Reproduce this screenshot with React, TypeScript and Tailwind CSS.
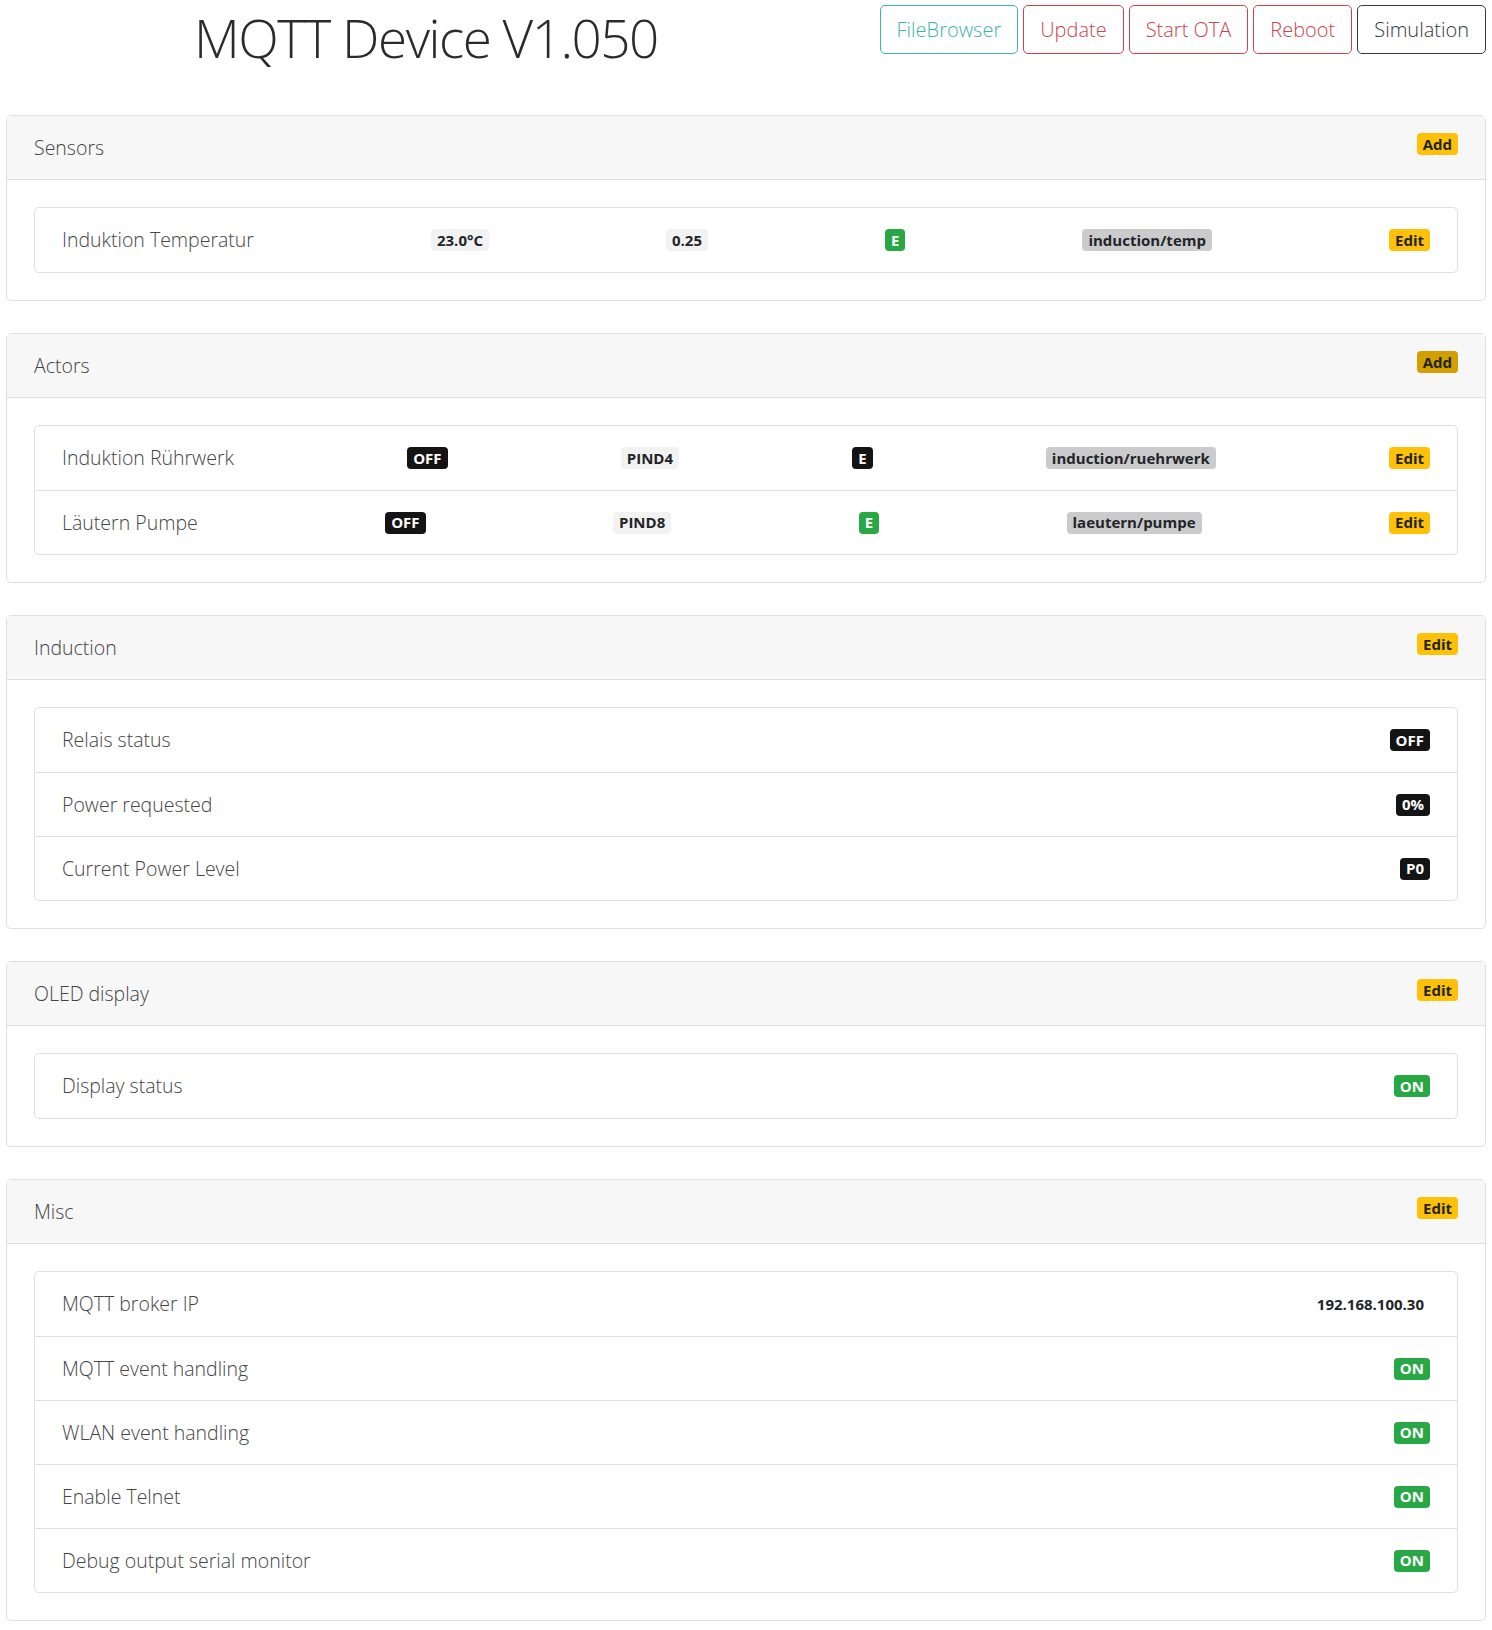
import React from 'react';

type Tone = 'warning' | 'warningDark' | 'dark' | 'success' | 'light' | 'gray' | 'plain';

const toneClass: Record<Tone, string> = {
    warning: 'bg-[#ffc107] text-[#212529]',
    warningDark: 'bg-[#d39e00] text-[#212529]',
    dark: 'bg-[#141414] text-white',
    success: 'bg-[#28a745] text-white',
    light: 'bg-[#f2f2f2] text-[#212529]',
    gray: 'bg-[#cbcbcb] text-[#212529]',
    plain: 'bg-transparent text-[#212529]',
};

function Badge({ tone, children }: { tone: Tone; children: React.ReactNode }) {
    return (
        <span className={`inline-flex h-[22px] items-center rounded-[4px] px-[6px] text-[15px] font-bold leading-none whitespace-nowrap ${toneClass[tone]}`}>
            {children}
        </span>
    );
}

function Card({ title, action, actionTone = 'warning', children }: { title: string; action: string; actionTone?: Tone; children: React.ReactNode }) {
    return (
        <div className="mx-[6px] mb-[32px] rounded-[5px] border border-[#dfdfdf] bg-white">
            {/* Header */}
            <div className="flex h-[64px] items-center justify-between border-b border-[#dfdfdf] bg-[#f7f7f7] px-[27px]">
                <span className="text-[19.5px] font-light text-[#444]">{title}</span>
                <span className="-mt-[8px]">
                    <Badge tone={actionTone}>{action}</Badge>
                </span>
            </div>
            {/* Body */}
            <div className="p-[27px]">
                <div className="overflow-hidden rounded-[5px] border border-[#dfdfdf]">{children}</div>
            </div>
        </div>
    );
}

function Row({ children, first }: { children: React.ReactNode; first?: boolean }) {
    return (
        <div className={`flex h-[64px] items-center justify-between px-[27px] ${first ? '' : 'border-t border-[#dfdfdf]'}`}>
            {children}
        </div>
    );
}

function Label({ children }: { children: React.ReactNode }) {
    return <span className="text-[19.5px] font-light text-[#444]">{children}</span>;
}

export default function App() {
    const actors = [
        { name: 'Induktion Rührwerk', pin: 'PIND4', inv: 'dark' as Tone, topic: 'induction/ruehrwerk' },
        { name: 'Läutern Pumpe', pin: 'PIND8', inv: 'success' as Tone, topic: 'laeutern/pumpe' },
    ];

    const induction = [
        { label: 'Relais status', value: 'OFF' },
        { label: 'Power requested', value: '0%' },
        { label: 'Current Power Level', value: 'P0' },
    ];

    const misc = ['MQTT event handling', 'WLAN event handling', 'Enable Telnet', 'Debug output serial monitor'];

    return (
        <div className="min-h-screen bg-white" style={{ fontFamily: '"Open Sans", "Liberation Sans", sans-serif' }}>
            {/* Top bar */}
            <div className="flex h-[115px] items-start justify-between px-[6px] pt-[5px]">
                <h1 className="pl-[188px] text-[53px] font-light leading-[66px] tracking-[-1.5px] text-[#2b2b2b]">MQTT Device V1.050</h1>
                <div className="flex gap-[5px]">
                    <button className="h-[49px] rounded-[5px] border border-[#3cb5a8] px-[16px] text-[20px] font-light text-[#3cb5a8]">FileBrowser</button>
                    <button className="h-[49px] rounded-[5px] border border-[#c9434d] px-[16px] text-[20px] font-light text-[#c9434d]">Update</button>
                    <button className="h-[49px] rounded-[5px] border border-[#c9434d] px-[16px] text-[20px] font-light text-[#c9434d]">Start OTA</button>
                    <button className="h-[49px] rounded-[5px] border border-[#c9434d] px-[16px] text-[20px] font-light text-[#c9434d]">Reboot</button>
                    <button className="h-[49px] rounded-[5px] border border-[#343a40] px-[16px] text-[20px] font-light text-[#343a40]">Simulation</button>
                </div>
            </div>

            <Card title="Sensors" action="Add">
                <Row first>
                    <Label>Induktion Temperatur</Label>
                    <Badge tone="light">23.0°C</Badge>
                    <Badge tone="light">0.25</Badge>
                    <Badge tone="success">E</Badge>
                    <Badge tone="gray">induction/temp</Badge>
                    <Badge tone="warning">Edit</Badge>
                </Row>
            </Card>

            <Card title="Actors" action="Add" actionTone="warningDark">
                {actors.map((a, i) => (
                    <Row key={a.name} first={i === 0}>
                        <Label>{a.name}</Label>
                        <Badge tone="dark">OFF</Badge>
                        <Badge tone="light">{a.pin}</Badge>
                        <Badge tone={a.inv}>E</Badge>
                        <Badge tone="gray">{a.topic}</Badge>
                        <Badge tone="warning">Edit</Badge>
                    </Row>
                ))}
            </Card>

            <Card title="Induction" action="Edit">
                {induction.map((r, i) => (
                    <Row key={r.label} first={i === 0}>
                        <Label>{r.label}</Label>
                        <Badge tone="dark">{r.value}</Badge>
                    </Row>
                ))}
            </Card>

            <Card title="OLED display" action="Edit">
                <Row first>
                    <Label>Display status</Label>
                    <Badge tone="success">ON</Badge>
                </Row>
            </Card>

            <Card title="Misc" action="Edit">
                <Row first>
                    <Label>MQTT broker IP</Label>
                    <Badge tone="plain">192.168.100.30</Badge>
                </Row>
                {misc.map((m) => (
                    <Row key={m}>
                        <Label>{m}</Label>
                        <Badge tone="success">ON</Badge>
                    </Row>
                ))}
            </Card>
        </div>
    );
}
